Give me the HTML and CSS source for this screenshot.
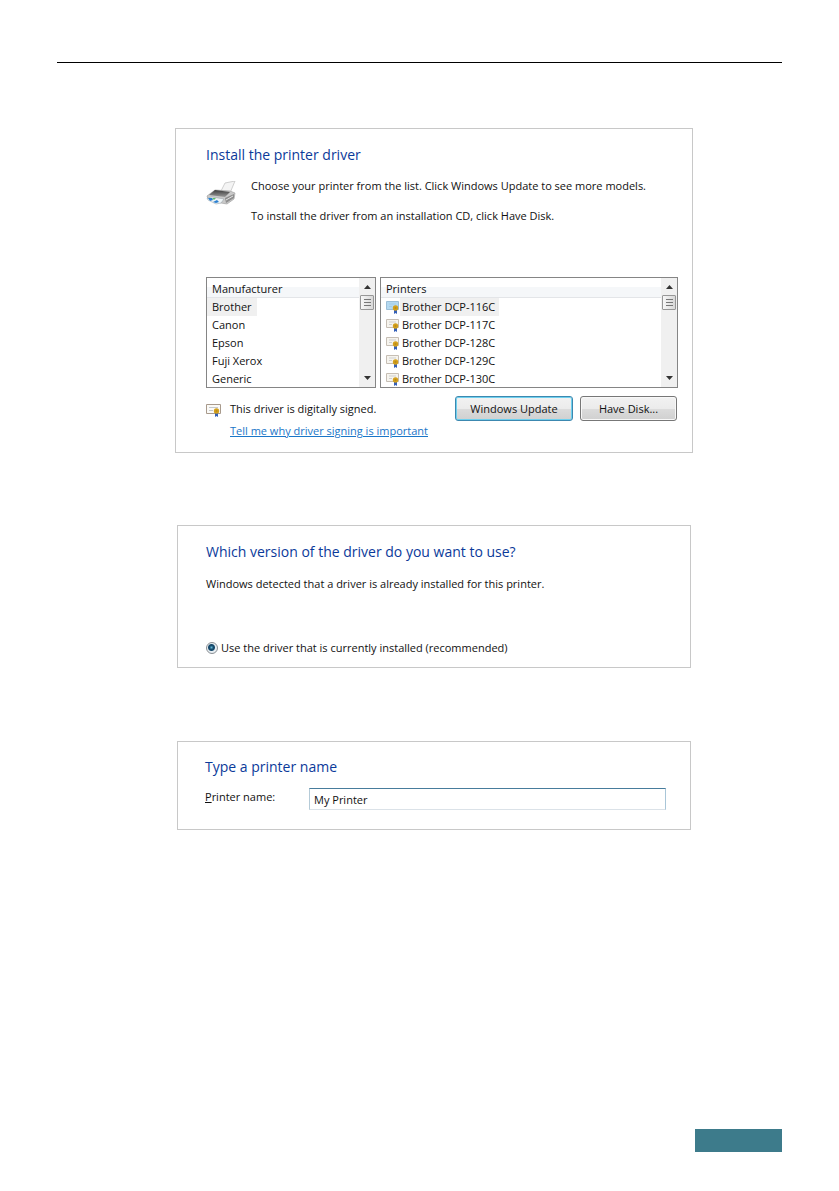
FILE: index.html
```html
<!DOCTYPE html>
<html lang="en">
<head>
  <meta charset="UTF-8">
  <meta name="viewport" content="width=device-width, initial-scale=1.0">
  <title>Install the printer driver</title>
  <link rel="stylesheet" href="styles.css">
</head>
<body>
  <svg class="defs" aria-hidden="true">
    <defs>
      <linearGradient id="tray" x1="0" y1="0" x2="0" y2="1">
        <stop offset="0" stop-color="#3c3c3c"/>
        <stop offset="1" stop-color="#999"/>
      </linearGradient>
      <g id="ribbon">
        <path d="M8 9v5l1.500-1 1.500 1V9z" fill="#3560b8"/>
        <circle cx="9.500" cy="8" r="2.700" fill="#d3a01c"/>
        <circle cx="9.500" cy="8" r="1" fill="#b98a18"/>
      </g>
      <symbol id="signed" viewBox="0 0 14 14">
        <path d="M.5 1.500h12v8H.5z" fill="#f6f4ee" stroke="#c6beb4"/>
        <path d="M3 4h7M3 6.500h3" stroke="#cfcfcf"/>
        <use href="#ribbon"/>
      </symbol>
      <symbol id="signed-large" viewBox="0 0 16 14">
        <path d="M.5 1.500h14v9H.5z" fill="#fbfaf7" stroke="#a89a8c"/>
        <path d="M3 4.500h9M3 7.500h4" stroke="#c4c8cc"/>
        <use href="#ribbon" x="1"/>
      </symbol>
      <symbol id="signed-active" viewBox="0 0 14 14">
        <path d="M.5 1.500h12v8H.5z" fill="#b4d9f1" stroke="#9cbfd8"/>
        <path d="M3 4h7M3 6.500h3" stroke="#a3cde8"/>
        <use href="#ribbon"/>
      </symbol>
    </defs>
  </svg>

  <header class="page-header"></header>

  <main class="content">
    <section class="panel panel-driver">
      <h2>Install the printer driver</h2>
      <div class="intro">
        <svg class="printer-icon" viewBox="0 0 30 24" aria-hidden="true">
          <path d="M15 10 19 2l10-2-5 12z" fill="#f4f4f4" stroke="#c4c4c4" stroke-width=".8"/>
          <path d="M1 15 9 9l15 1 5 2-1 6-7 5-6-1-13-4z" fill="#c9c9c9" stroke="#999" stroke-width=".6"/>
          <path d="M3 14 9 9l15 2-5 5z" fill="url(#tray)"/>
          <path d="M19 17l9-4v4l-8 5z" fill="#8e8e8e"/>
          <path d="M20 19l7-4" stroke="#e4e4e4"/>
          <path d="M1 17l5-1 12 2-3 4-5 1-8-4z" fill="#eef4f6" stroke="#909aa0" stroke-width=".5"/>
          <path d="M2 17l4 0 1 2-3 1zM7 21l4-2 2 2-3 1z" fill="#2b7fd0"/>
          <path d="M6 17l4 0-2 2z" fill="#5fb96a"/>
        </svg>
        <div>
          <p>Choose your printer from the list. Click Windows Update to see more models.</p>
          <p>To install the driver from an installation CD, click Have Disk.</p>
        </div>
      </div>

      <div class="lists">
        <div class="list">
          <div class="list-main">
            <div class="list-header" id="manufacturer">Manufacturer</div>
            <ul role="listbox" aria-labelledby="manufacturer">
              <li role="option" aria-selected="true"><span class="item">Brother</span></li>
              <li role="option"><span class="item">Canon</span></li>
              <li role="option"><span class="item">Epson</span></li>
              <li role="option"><span class="item">Fuji Xerox</span></li>
              <li role="option"><span class="item">Generic</span></li>
            </ul>
          </div>
          <div class="scrollbar">
            <button type="button" aria-label="Scroll up"><svg viewBox="0 0 7 4"><path d="M0 4 3.500 0 7 4z"/></svg></button>
            <div class="thumb"></div>
            <button type="button" aria-label="Scroll down"><svg viewBox="0 0 7 4"><path d="M0 0h7L3.500 4z"/></svg></button>
          </div>
        </div>

        <div class="list list-printers">
          <div class="list-main">
            <div class="list-header" id="printers">Printers</div>
            <ul role="listbox" aria-labelledby="printers">
              <li role="option" aria-selected="true"><svg class="cert"><use href="#signed-active"/></svg><span class="item">Brother DCP-116C</span></li>
              <li role="option"><svg class="cert"><use href="#signed"/></svg><span class="item">Brother DCP-117C</span></li>
              <li role="option"><svg class="cert"><use href="#signed"/></svg><span class="item">Brother DCP-128C</span></li>
              <li role="option"><svg class="cert"><use href="#signed"/></svg><span class="item">Brother DCP-129C</span></li>
              <li role="option"><svg class="cert"><use href="#signed"/></svg><span class="item">Brother DCP-130C</span></li>
            </ul>
          </div>
          <div class="scrollbar">
            <button type="button" aria-label="Scroll up"><svg viewBox="0 0 7 4"><path d="M0 4 3.500 0 7 4z"/></svg></button>
            <div class="thumb"></div>
            <button type="button" aria-label="Scroll down"><svg viewBox="0 0 7 4"><path d="M0 0h7L3.500 4z"/></svg></button>
          </div>
        </div>
      </div>

      <div class="footer-row">
        <svg class="cert-large"><use href="#signed-large"/></svg>
        <div class="signing">
          <p>This driver is digitally signed.</p>
          <a href="#">Tell me why driver signing is important</a>
        </div>
        <div class="actions">
          <button type="button" class="btn btn-default">Windows Update</button>
          <button type="button" class="btn">Have Disk...</button>
        </div>
      </div>
    </section>

    <section class="panel panel-version">
      <h2>Which version of the driver do you want to use?</h2>
      <p>Windows detected that a driver is already installed for this printer.</p>
      <div class="option">
        <input type="radio" id="current" name="version" checked>
        <label for="current">Use the driver that is currently installed (recommended)</label>
      </div>
    </section>

    <section class="panel panel-name">
      <h2>Type a printer name</h2>
      <div class="field">
        <label for="printerName"><u>P</u>rinter name:</label>
        <input type="text" id="printerName" value="My Printer">
      </div>
    </section>
  </main>

  <footer class="page-footer">
    <div class="page-tab"></div>
  </footer>
</body>
</html>
```
FILE: styles.css
```css
* {
  box-sizing: border-box;
}

body {
  margin: 0;
  padding: 62px 57px 39px 57px;
  min-height: 100vh;
  display: flex;
  flex-direction: column;
  background: #fff;
  color: #111;
  font-family: "Open Sans", "Noto Sans", sans-serif;
  font-size: 11px;
  line-height: 18px;
}

h2, p, ul {
  margin: 0;
  padding: 0;
}

h2 {
  color: #0b3a9a;
  font-size: 14px;
  font-weight: normal;
  line-height: 20px;
}

button, input {
  font-family: inherit;
  font-size: inherit;
  color: inherit;
}

.defs {
  position: absolute;
  width: 0;
  height: 0;
}

.page-header {
  border-top: 1px solid #000;
}

.content {
  flex: 1;
  padding: 65px 89px 0 118px;
}

.panel {
  border: 1px solid #c8c8c8;
}

/* Driver list */

.panel-driver {
  padding: 16px 14px 12px 30px;
}

.intro {
  display: flex;
  gap: 15px;
  margin-top: 12px;
}

.intro p {
  margin-bottom: 12px;
}

.printer-icon {
  width: 30px;
  height: 24px;
  margin-top: 4px;
}

.lists {
  display: grid;
  grid-template-columns: 170fr 298fr;
  gap: 4px;
  margin-top: 40px;
}

.list {
  display: flex;
  height: 111px;
  border: 1px solid #858585;
  overflow: hidden;
}

.list-main {
  flex: 1;
}

.list-header {
  height: 20px;
  padding: 2px 5px 0;
  border-bottom: 1px solid #e3e5e8;
  background: linear-gradient(#fff 50%, #f5f7f9 50%);
}

.list ul {
  list-style: none;
}

.list li {
  display: flex;
  align-items: center;
  height: 18px;
}

.list li .item {
  padding: 0 5px;
}

.list li[aria-selected="true"] .item {
  background: #f0f0f0;
}

.list-printers li {
  padding-left: 5px;
}

.list-printers li .item {
  padding: 0 4px 0 2px;
}

.cert {
  flex: none;
  width: 14px;
  height: 14px;
}

.scrollbar {
  display: flex;
  flex-direction: column;
  width: 16px;
  padding: 1px;
  background: #f0f0f0;
}

.scrollbar button {
  display: flex;
  align-items: center;
  justify-content: center;
  height: 16px;
  padding: 0;
  border: none;
  background: none;
}

.scrollbar svg {
  width: 7px;
  height: 4px;
  fill: #333;
}

.thumb {
  height: 15px;
  margin-bottom: auto;
  border: 1px solid #979797;
  border-radius: 1px;
  background:
    repeating-linear-gradient(#777 0 1px, transparent 1px 3px) center / 7px 7px no-repeat,
    linear-gradient(90deg, #f7f7f7, #d8d8d8);
}

.footer-row {
  display: flex;
  align-items: flex-start;
  margin-top: 8px;
}

.cert-large {
  width: 16px;
  height: 14px;
  margin: 7px 8px 0 0;
}

.signing {
  padding-top: 4px;
}

.signing p {
  margin-bottom: 4px;
}

.signing a {
  color: #1a76c8;
}

.actions {
  display: flex;
  gap: 7px;
  margin: 0 1px 0 auto;
}

.btn {
  width: 97px;
  height: 25px;
  padding: 0;
  border: 1px solid #777;
  border-radius: 3px;
  background: linear-gradient(#f2f2f2, #ebebeb 50%, #dcdcdc 50%, #d0d0d0);
  box-shadow: inset 0 0 0 1px #f8f8f8;
}

.btn-default {
  width: 118px;
  border-color: #3c88b0;
  box-shadow: inset 0 0 0 1px #6fd0ee;
}

/* Driver version */

.panel-version {
  margin: 72px 2px 0;
  padding: 16px 28px 10px;
}

.panel-version p {
  margin-top: 13px;
}

.option {
  display: flex;
  align-items: center;
  gap: 3px;
  margin-top: 46px;
}

.option input {
  appearance: none;
  width: 12px;
  height: 12px;
  margin: 0;
  border: 1px solid #8a8f94;
  border-radius: 50%;
  background: radial-gradient(circle at 45% 45%, #5fb6d4 0, #174a6c 2px, #174a6c 3px, #e8eef2 4px);
}

/* Printer name */

.panel-name {
  margin: 73px 2px 0;
  padding: 15px 24px 19px 27px;
}

.field {
  display: flex;
  align-items: flex-start;
  margin-top: 11px;
}

.field label {
  width: 104px;
}

.field input {
  flex: 1;
  height: 22px;
  padding: 0 4px;
  border: 1px solid #dbe2e8;
  border-top-color: #477c9c;
  border-right-color: #a9c6d8;
  border-left-color: #b5cbd8;
}

.page-footer {
  display: flex;
  justify-content: flex-end;
}

.page-tab {
  width: 87px;
  height: 23px;
  background: #3d7b8b;
}
```
